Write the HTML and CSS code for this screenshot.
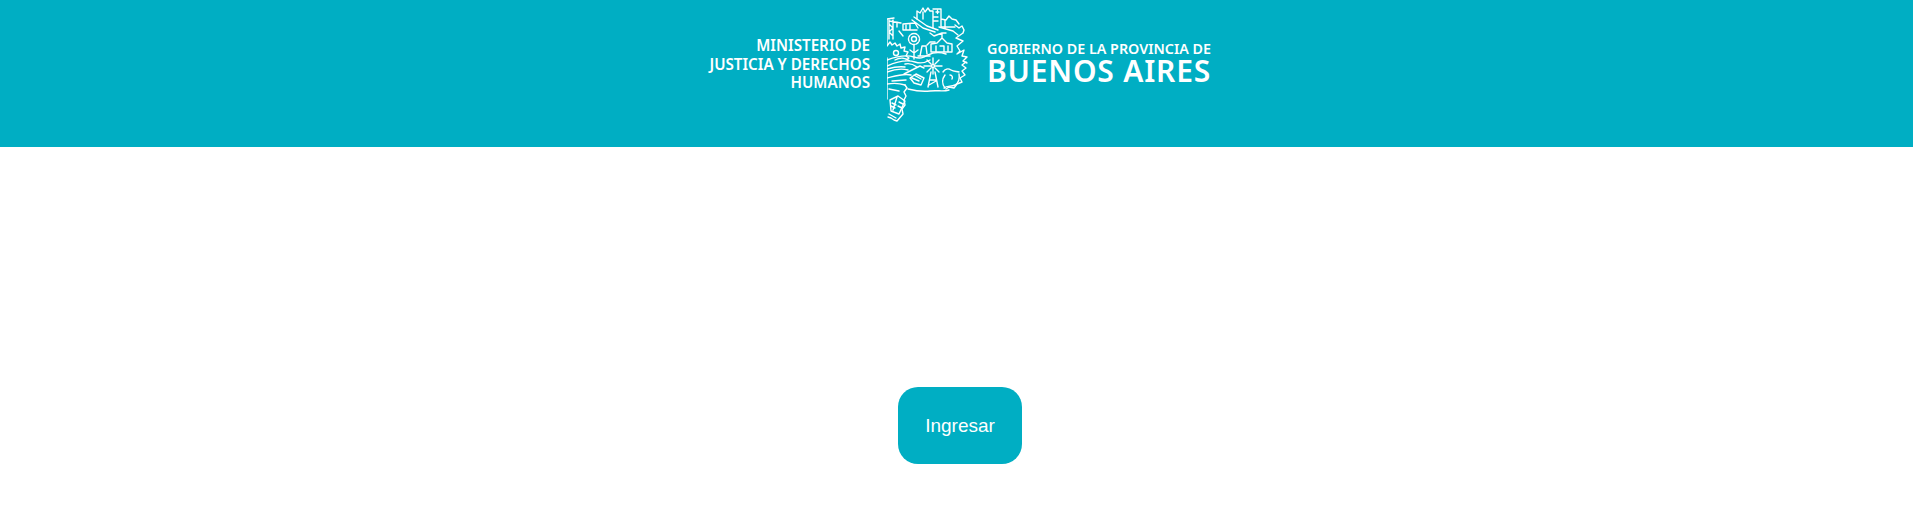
FILE: index.html
```html
<!DOCTYPE html>
<html lang="es">
<head>
<meta charset="utf-8">
<title>Ministerio de Justicia y Derechos Humanos</title>
<link rel="stylesheet" href="styles.css">
</head>
<body>
<header class="header">
  <div class="brand">
    <div class="ministry">MINISTERIO DE<br>JUSTICIA Y DERECHOS<br>HUMANOS</div>
    <svg class="map" viewBox="887 5 84 118" aria-hidden="true">
      <g class="ink">
        <!-- outline pieces -->
        <path d="M887 19l7-1M887 19v26M887 58v41M905 85l2 3-3 4 2 4-2 4 1 5-3 4 1 5-6 7-3-1-3-2-3-1"/>
        <!-- crane -->
        <path d="M889 20v19M893 20v19M889 24l4 4-4 4 4 4M889 21l12 2M897 22v5"/>
        <!-- vehicle and road -->
        <path d="M903 30v-6l12-1 3 5M906 24v6M910 24v6M903 30h14M899 31l4 5M914 17l13 9 11 4M912 20l11 8 12 4"/>
        <!-- buildings -->
        <path d="M917 19v-8l3 2 3-5 2 4 3-4 2 3h3v17M923 12v7M933 9h8v18M936 12h3M937.500 10.500v3M934 17h4M934 21h4M941 19l5 1 3-4 3 3 4 1M945 20v8M941 27h14M956 20l3 4"/>
        <!-- right contour, broken into wedges -->
        <path d="M955 25l4 3 3-2 2 4-1 3M963 33l-7 5 7 3-6 5 3 5-3 3 7-4-2 6 5 1-4 4 4 2"/>
        <path d="M966 62l-4 3 4 3-4 3 3 4-5 3 2 4-5 2-3 4-5-1-3 2M939 27l14 4 5 4"/>
        <!-- sunflower -->
        <circle cx="914" cy="39" r="2.500"/>
        <circle cx="914" cy="39" r="5.500" stroke-dasharray="2.500 1.200"/>
        <path d="M914 45v14M910 50l4 3 4-3"/>
        <!-- gear -->
        <path d="M887 46l3-4 2 3 3-2 2 3 3-2 1 4 4-1-1 4 4 1-2 4 3 2-3 2"/>
        <circle cx="896" cy="53" r="2.500"/>
        <!-- factory -->
        <path d="M920 56l2-10h4l1 8M927 45l3-3h5M918 56h12"/>
        <!-- school -->
        <path d="M931 52v-8l6-1 5-5 5 5 5 1v8zM942 38v-5h4M936 46v6M940 46h4v6M948 46v6M930 33l4 3 8-3"/>
        <!-- field waves -->
        <path d="M887 60c8-3 18-6 27-3 6 2 9 1 14-2 6-3 12-3 18-1M887 66c9-4 19-7 28-4 6 2 10 1 15-2M887 72c8-3 14-4 21-2M887 78c8-2 17-5 24-3M895 60c5-3 11-2 15 1M905 64c4-1 8 0 12 3M887 84c6-1 12-1 18 1M889 89l10 2M887 69c7-2 12-3 18-2M892 81l14-1"/>
        <!-- book and windmill -->
        <path d="M910 78l6-4 8 4-3 7-7-2zM912 78l7 3M914 75l7 4M904 74l16-8 4 2"/>
        <circle cx="933" cy="66" r="1.500"/>
        <path d="M933 64v-6M933 68v6M931 66h-7M935 66h7M931 64l-4-4M935 64l4-4M931 68l-4 4M935 68l4 4M931 72l-3 15M935 72l3 15M930 80h6M929 85l7-4"/>
        <!-- cow and lower waves -->
        <path d="M943 72c2-3 5-4 8-2 3 2 6 1 8 2M945 88c-3-4-3-9 0-13M950 75c2 0 3 2 2 4M959 74c1 5-1 9-4 11-4 2-8 0-11 3M908 89c8 2 14 3 22 2 8-1 13 1 19-1"/>
        <!-- open book at tip -->
        <path d="M890 100l8-4 7 5-6 13-8-3zM897 97l-4 13M892 103l4 2M891 106l4 2M899 102l4 2M898 106l4 2M889 114l7 4"/>
      </g>
    </svg>
    <div class="gov">
      <div class="gov-top">GOBIERNO DE LA PROVINCIA DE</div>
      <div class="gov-main">BUENOS AIRES</div>
    </div>
  </div>
</header>
<main class="main">
  <button class="enter" type="button">Ingresar</button>
</main>
</body>
</html>
```

FILE: styles.css
```css
* { box-sizing: border-box; }
html, body { margin: 0; padding: 0; background: #fff; }
body { min-height: 524px; overflow: hidden; }
.header {
  height: 147px;
  background: #00aec3;
  display: flex;
  justify-content: center;
  color: #fff;
  font-family: "Noto Sans", sans-serif;
  font-weight: 600;
}
.brand { display: flex; align-items: flex-start; }
.ministry {
  width: 168px;
  margin-top: 36px;
  text-align: right;
  font-size: 15.200px;
  line-height: 18.500px;
  white-space: nowrap;
}
.map {
  width: 84px;
  height: 118px;
  margin: 5px 16px 0 17px;
  flex: none;
}
.ink {
  fill: none;
  stroke: #fff;
  stroke-width: 1.400;
  stroke-linecap: round;
  stroke-linejoin: round;
}
.gov { width: 224px; margin-top: 39px; }
.gov-top { font-size: 14.300px; line-height: 19px; white-space: nowrap; }
.gov-main { font-size: 30px; font-weight: 600; letter-spacing: 0.800px; line-height: 25px; white-space: nowrap; }
.main {
  display: flex;
  justify-content: center;
  padding: 240px 0 0 7px;
}
.enter {
  width: 124px;
  height: 77px;
  border: 0;
  border-radius: 20px;
  background: #00aec3;
  color: #fff;
  font-family: "Liberation Sans", sans-serif;
  font-size: 19px;
  padding: 0;
}
```
